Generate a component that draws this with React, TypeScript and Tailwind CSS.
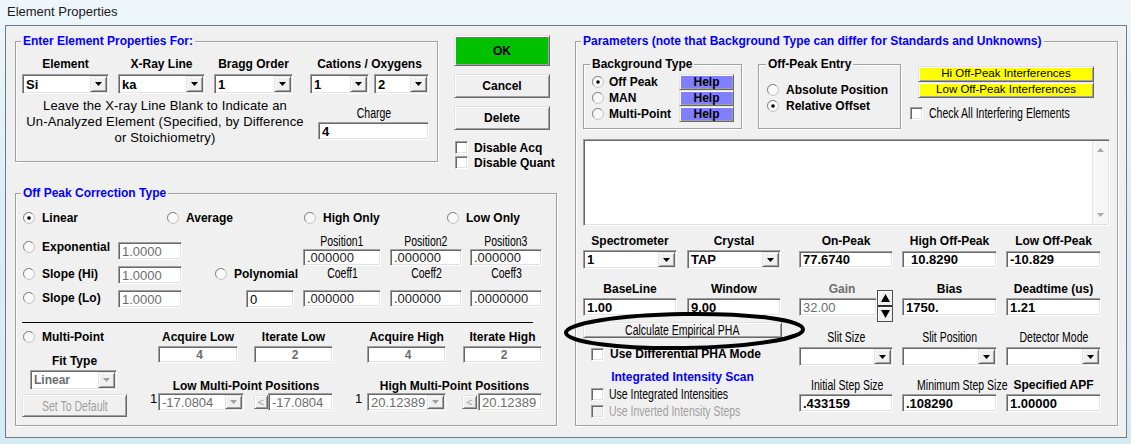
import React from 'react';

type P = { className?: string; children?: React.ReactNode };

// classic 3D borders
const SK = 'border border-t-[#a0a0a0] border-l-[#a0a0a0] border-b-white border-r-white shadow-[inset_1px_1px_0_#696969,inset_-1px_-1px_0_#e3e3e3]';
const RS = 'border border-t-[#e3e3e3] border-l-[#e3e3e3] border-b-[#696969] border-r-[#696969] shadow-[inset_1px_1px_0_#ffffff,inset_-1px_-1px_0_#a0a0a0]';
const BOLD = 'font-bold text-[12px] leading-[14px] whitespace-nowrap';
const GRAY = 'text-[#6d6d6d]';
const DIS = 'text-[#a0a0a0]';

function N({ children, className = '' }: P) {
    return <span className={`inline-block whitespace-nowrap text-[14px] leading-[14px] scale-x-[0.75] ${className}`}>{children}</span>;
}

function Group({ title, className = '', children, blue = true, tl = 'left-[5px]' }: P & { title: string; blue?: boolean; tl?: string }) {
    return (
        <div className={`relative shrink-0 border border-[#a0a0a0] shadow-[inset_1px_1px_0_#ffffff,1px_1px_0_#ffffff] ${className}`}>
            <span className={`absolute top-[-8px] px-[2px] bg-[#f0f0f0] ${tl} ${BOLD} ${blue ? 'text-[#0000ff]' : 'text-black'}`}>{title}</span>
            {children}
        </div>
    );
}

function Box({ className = '', children, t = 'font-bold text-[13px]' }: P & { t?: string }) {
    return <div className={`${SK} bg-white shrink-0 flex items-center pl-[3px] overflow-hidden whitespace-nowrap leading-none ${t} ${className}`}>{children}</div>;
}

function Combo({ className = '', value = '', disabled = false, t = 'font-bold text-[13px]' }: { className?: string; value?: string; disabled?: boolean; t?: string }) {
    return (
        <div className={`${SK} bg-white shrink-0 flex p-px ${className}`}>
            <div className={`flex-1 min-w-0 flex items-center pl-[2px] overflow-hidden whitespace-nowrap leading-none ${t} ${disabled ? GRAY : ''}`}>{value}</div>
            <div className={`${RS} bg-[#f0f0f0] w-[17px] shrink-0 flex items-center justify-center`}>
                <svg width="7" height="4" viewBox="0 0 7 4"><path d="M0 0H7L3.5 4Z" fill={disabled ? '#a0a0a0' : '#000'} /></svg>
            </div>
        </div>
    );
}

function Btn({ className = '', bg = 'bg-[#f0f0f0]', children }: P & { bg?: string }) {
    return <div className={`${RS} ${bg} shrink-0 flex items-center justify-center ${className}`}>{children}</div>;
}

function Radio({ checked = false }: { checked?: boolean }) {
    return (
        <svg width="12" height="12" viewBox="0 0 12 12" className="shrink-0">
            <circle cx="6" cy="6" r="5.5" fill="#f8f8f8" stroke="#c4c4c4" />
            <path d="M2 9.5A5 5 0 0 1 9.5 2" fill="none" stroke="#8a8a8a" />
            {checked && <circle cx="6" cy="6" r="1.8" fill="#000" />}
        </svg>
    );
}

function Check({ disabled = false }: { disabled?: boolean }) {
    return <div className={`${SK} ${disabled ? 'bg-[#f0f0f0]' : 'bg-white'} w-[13px] h-[13px] shrink-0`} />;
}

function RadioItem({ label, checked = false, className = '', gap = 'ml-[7px]' }: { label: string; checked?: boolean; className?: string; gap?: string }) {
    return (
        <div className={`flex items-center ${className}`}>
            <Radio checked={checked} />
            <span className={`${gap} ${BOLD}`}>{label}</span>
        </div>
    );
}

function Lbl({ children, className = '' }: P) {
    return <div className={`h-[14px] text-center ${BOLD} ${className}`}>{children}</div>;
}

function NLbl({ children, className = '' }: P) {
    return <div className={`h-[14px] leading-[14px] text-center ${className}`}><N>{children}</N></div>;
}

function Spin() {
    return (
        <div className="-mt-[6px] w-[16px] h-[32px] shrink-0 flex flex-col border border-[#505050] bg-[#f0f0f0]">
            <div className="flex-1 flex items-center justify-center border-b-2 border-[#303030] shadow-[inset_1px_1px_0_#ffffff]">
                <svg width="9" height="8" viewBox="0 0 9 8"><path d="M4.5 0L9 8H0Z" fill="#000" /></svg>
            </div>
            <div className="flex-1 flex items-center justify-center shadow-[inset_1px_1px_0_#ffffff]">
                <svg width="9" height="8" viewBox="0 0 9 8"><path d="M0 0H9L4.5 8Z" fill="#000" /></svg>
            </div>
        </div>
    );
}

export default function App() {
    return (
        <div className="relative w-[1131px] h-[444px] overflow-hidden bg-gradient-to-b from-[#eef6fb] via-[#dcedf6] to-[#d3ecf3] font-['Liberation_Sans',Arial,sans-serif] text-black">
            <div className="h-[25px] pt-[4px] pl-[7px] text-[13px] leading-[16px] text-[#1a1a1a]">Element Properties</div>
            <div className="ml-[5px] w-[1122px] h-[413px] border border-[#6f7a84] bg-[#f0f0f0] flex pl-[9px] pt-[9px]">
                {/* left column */}
                <div className="w-[542px] shrink-0 flex flex-col">
                    <div className="flex items-start">
                        <Group title="Enter Element Properties For:" className="mt-[6px] w-[423px] h-[121px]">
                            <div className="flex pl-[6px] pt-[15px]">
                                <div className="w-[87px] flex flex-col">
                                    <Lbl>Element</Lbl>
                                    <Combo className="mt-[3px] h-[20px] w-full" value="Si" />
                                </div>
                                <div className="ml-[9px] w-[87px] flex flex-col">
                                    <Lbl>X-Ray Line</Lbl>
                                    <Combo className="mt-[3px] h-[20px] w-full" value="ka" />
                                </div>
                                <div className="ml-[9px] w-[79px] flex flex-col">
                                    <Lbl>Bragg Order</Lbl>
                                    <Combo className="mt-[3px] h-[20px] w-full" value="1" />
                                </div>
                                <div className="ml-[17px] w-[119px] flex flex-col">
                                    <Lbl>Cations / Oxygens</Lbl>
                                    <div className="mt-[3px] flex">
                                        <Combo className="h-[20px] w-[59px]" value="1" />
                                        <Combo className="ml-[5px] h-[20px] w-[55px]" value="2" />
                                    </div>
                                </div>
                            </div>
                            <div className="flex">
                                <div className="w-[298px] mt-[4px] text-center text-[13px] leading-[16px] tracking-[0.15px]">
                                    Leave the X-ray Line Blank to Indicate an<br />
                                    Un-Analyzed Element (Specified, by Difference<br />
                                    or Stoichiometry)
                                </div>
                                <div className="ml-[4px] w-[111px] flex flex-col">
                                    <NLbl className="mt-[12px]">Charge</NLbl>
                                    <Box className="mt-[2px] h-[18px] w-full">4</Box>
                                </div>
                            </div>
                        </Group>
                        <div className="ml-[16px] w-[96px] flex flex-col">
                            <Btn className={`h-[31px] ${BOLD}`} bg="bg-[#00c000]">OK</Btn>
                            <Btn className={`mt-[8px] h-[24px] ${BOLD}`}>Cancel</Btn>
                            <Btn className={`mt-[8px] h-[24px] ${BOLD}`}>Delete</Btn>
                            <div className="mt-[10px] h-[15px] flex items-center pl-[1px]">
                                <Check />
                                <span className={`ml-[6px] ${BOLD}`}>Disable Acq</span>
                            </div>
                            <div className="h-[15px] flex items-center pl-[1px]">
                                <Check />
                                <span className={`ml-[6px] ${BOLD}`}>Disable Quant</span>
                            </div>
                        </div>
                    </div>

                    <Group title="Off Peak Correction Type" className="mt-[23px] w-[542px] h-[233px]">
                        <div className="mt-[17px] h-[14px] flex items-center pl-[7px]">
                            <RadioItem className="w-[144px]" label="Linear" checked />
                            <RadioItem className="w-[137px]" label="Average" />
                            <RadioItem className="w-[143px]" label="High Only" />
                            <RadioItem label="Low Only" />
                        </div>
                        <div className="flex items-start pl-[7px] h-[83px]">
                            <div className="w-[95px] shrink-0 flex flex-col">
                                <RadioItem className="mt-[15px] h-[14px]" label="Exponential" />
                                <RadioItem className="mt-[13px] h-[14px]" label="Slope (Hi)" />
                                <RadioItem className="mt-[10px] h-[14px]" label="Slope (Lo)" />
                            </div>
                            <div className="w-[64px] shrink-0 flex flex-col">
                                <Box className="mt-[17px] h-[18px] w-full" t={`text-[13px] ${GRAY}`}>1.0000</Box>
                                <Box className="mt-[6px] h-[18px] w-full" t={`text-[13px] ${GRAY}`}>1.0000</Box>
                                <Box className="mt-[6px] h-[18px] w-full" t={`text-[13px] ${GRAY}`}>1.0000</Box>
                            </div>
                            <div className="ml-[33px] w-[79px] shrink-0 flex flex-col">
                                <RadioItem className="mt-[42px] h-[14px]" label="Polynomial" />
                                <Box className="ml-[31px] mt-[9px] h-[18px] w-[48px]" t="text-[13px]">0</Box>
                            </div>
                            <div className="ml-[9px] flex">
                                {[
                                    ['Position1', 'Coeff1', '.000000', 'w-[78px]', ''],
                                    ['Position2', 'Coeff2', '.000000', 'w-[72px]', 'ml-[9px]'],
                                    ['Position3', 'Coeff3', '.0000000', 'w-[72px]', 'ml-[8px]'],
                                ].map(([p, c, v, w, m]) => (
                                    <div key={p} className={`${w} ${m} flex flex-col`}>
                                        <NLbl className="mt-[9px]">{p}</NLbl>
                                        <Box className="mt-[1px] h-[17px] w-full" t="text-[13px] text-[#222]">.000000</Box>
                                        <NLbl>{c}</NLbl>
                                        <Box className="mt-[10px] h-[17px] w-full" t="text-[13px] text-[#222]">{v}</Box>
                                    </div>
                                ))}
                            </div>
                        </div>
                        <div className="mt-[14px] ml-[6px] w-[511px] h-px bg-black" />
                        <div className="flex items-start pl-[6px]">
                            <div className="w-[105px] shrink-0 flex flex-col">
                                <RadioItem className="pl-[1px] mt-[7px] h-[14px]" label="Multi-Point" />
                                <Lbl className="mt-[10px]">Fit Type</Lbl>
                                <Combo className="ml-[8px] mt-[2px] h-[20px] w-[87px]" value="Linear" disabled t="font-bold text-[12px]" />
                                <Btn className="mt-[4px] h-[23px] w-full"><N className={DIS}>Set To Default</N></Btn>
                            </div>
                            <div className="ml-[23px] w-[184px] shrink-0 flex flex-col">
                                <div className="flex pl-[8px]">
                                    <div className="w-[80px] flex flex-col">
                                        <Lbl className="mt-[7px]">Acquire Low</Lbl>
                                        <Box className={`mt-[2px] h-[17px] w-full justify-center pl-0`} t={`font-bold text-[12px] ${GRAY}`}>4</Box>
                                    </div>
                                    <div className="ml-[16px] w-[79px] flex flex-col">
                                        <Lbl className="mt-[7px]">Iterate Low</Lbl>
                                        <Box className={`mt-[2px] h-[17px] w-full justify-center pl-0`} t={`font-bold text-[12px] ${GRAY}`}>2</Box>
                                    </div>
                                </div>
                                <Lbl className="mt-[16px] pl-[8px]">Low Multi-Point Positions</Lbl>
                                <div className="flex items-start">
                                    <span className="w-[8px] text-[13px] leading-[12px]">1</span>
                                    <Combo className="h-[18px] w-[86px]" value="-17.0804" disabled t="text-[13px]" />
                                    <Btn className={`ml-[10px] mt-[2px] h-[14px] w-[14px] text-[11px] leading-none ${DIS}`}>&lt;</Btn>
                                    <Box className="h-[18px] w-[65px]" t={`text-[13px] ${GRAY}`}>-17.0804</Box>
                                </div>
                            </div>
                            <div className="ml-[21px] w-[187px] shrink-0 flex flex-col">
                                <div className="flex pl-[12px]">
                                    <div className="w-[79px] flex flex-col">
                                        <Lbl className="mt-[7px]">Acquire High</Lbl>
                                        <Box className={`mt-[2px] h-[17px] w-full justify-center pl-0`} t={`font-bold text-[12px] ${GRAY}`}>4</Box>
                                    </div>
                                    <div className="ml-[17px] w-[79px] flex flex-col">
                                        <Lbl className="mt-[7px]">Iterate High</Lbl>
                                        <Box className={`mt-[2px] h-[17px] w-full justify-center pl-0`} t={`font-bold text-[12px] ${GRAY}`}>2</Box>
                                    </div>
                                </div>
                                <Lbl className="mt-[16px] pl-[12px]">High Multi-Point Positions</Lbl>
                                <div className="flex items-start">
                                    <span className="w-[12px] text-[13px] leading-[12px]">1</span>
                                    <Combo className="h-[18px] w-[79px]" value="20.12389" disabled t="text-[13px]" />
                                    <Btn className={`ml-[16px] mt-[2px] h-[14px] w-[15px] text-[11px] leading-none ${DIS}`}>&lt;</Btn>
                                    <Box className="ml-[1px] h-[18px] w-[64px]" t={`text-[13px] ${GRAY}`}>20.12389</Box>
                                </div>
                            </div>
                        </div>
                    </Group>
                </div>

                {/* right group */}
                <Group title="Parameters (note that Background Type can differ for Standards and Unknowns)" className="ml-[18px] mt-[6px] w-[543px] h-[385px]">
                    <div className="flex items-start">
                        <Group title="Background Type" blue={false} tl="left-[6px]" className="ml-[7px] mt-[22px] w-[159px] h-[65px]">
                            <div className="pt-[9px] pl-[8px] flex flex-col">
                                {[
                                    ['Off Peak', true],
                                    ['MAN', false],
                                    ['Multi-Point', false],
                                ].map(([l, c]) => (
                                    <div key={l as string} className="flex h-[16px]">
                                        <RadioItem className="w-[87px]" gap="ml-[5px]" label={l as string} checked={c as boolean} />
                                        <Btn className={`w-[55px] h-[16px] ${BOLD}`} bg="bg-[#8080ff]">Help</Btn>
                                    </div>
                                ))}
                            </div>
                        </Group>
                        <Group title="Off-Peak Entry" blue={false} tl="left-[7px]" className="ml-[16px] mt-[22px] w-[143px] h-[65px]">
                            <div className="pt-[17px] pl-[8px] flex flex-col">
                                <RadioItem className="h-[16px]" label="Absolute Position" />
                                <RadioItem className="h-[16px]" label="Relative Offset" checked />
                            </div>
                        </Group>
                        <div className="ml-[9px] flex flex-col">
                            <Btn className="ml-[8px] mt-[24px] w-[176px] h-[16px] text-[11.5px] leading-none" bg="bg-[#ffff00]">Hi Off-Peak Interferences</Btn>
                            <Btn className="ml-[8px] w-[176px] h-[16px] text-[11.5px] leading-none" bg="bg-[#ffff00]">Low Off-Peak Interferences</Btn>
                            <div className="mt-[8px] h-[14px] flex items-center">
                                <Check />
                                <span className="ml-[6px] w-[140px] flex"><N className="origin-left">Check All Interfering Elements</N></span>
                            </div>
                        </div>
                    </div>

                    <div className={`${SK} bg-white ml-[7px] mt-[10px] w-[527px] h-[87px] flex justify-end p-px`}>
                        <div className="w-[16px] bg-[#f6f6f6] border-l border-[#e6e6e6] flex flex-col items-center justify-between py-[7px]">
                            <svg width="7" height="4" viewBox="0 0 7 4"><path d="M3.5 0L7 4H0Z" fill="#a8a8a8" /></svg>
                            <svg width="7" height="4" viewBox="0 0 7 4"><path d="M0 0H7L3.5 4Z" fill="#a8a8a8" /></svg>
                        </div>
                    </div>

                    <div className="flex ml-[7px] mt-[8px]">
                        {/* left block */}
                        <div className="w-[199px] shrink-0 flex flex-col">
                            <div className="flex">
                                <div className="w-[94px] flex flex-col">
                                    <Lbl>Spectrometer</Lbl>
                                    <Combo className="mt-[2px] h-[19px] w-full" value="1" />
                                </div>
                                <div className="ml-[10px] w-[94px] flex flex-col">
                                    <Lbl>Crystal</Lbl>
                                    <Combo className="mt-[2px] h-[19px] w-full" value="TAP" />
                                </div>
                            </div>
                            <div className="flex mt-[13px]">
                                <div className="w-[94px] flex flex-col">
                                    <Lbl>BaseLine</Lbl>
                                    <Box className="mt-[2px] h-[18px] w-full">1.00</Box>
                                </div>
                                <div className="ml-[10px] w-[94px] flex flex-col">
                                    <Lbl>Window</Lbl>
                                    <Box className="mt-[2px] h-[18px] w-full">9.00</Box>
                                </div>
                            </div>
                            <Btn className="mt-[6px] h-[16px] w-[199px]"><N>Calculate Empirical PHA</N></Btn>
                            <div className="mt-[9px] h-[14px] pl-[8px] flex items-center">
                                <Check />
                                <span className={`ml-[6px] ${BOLD}`}>Use Differential PHA Mode</span>
                            </div>
                            <Lbl className="mt-[9px] text-[#0000ff]">Integrated Intensity Scan</Lbl>
                            <div className="mt-[3px] h-[14px] pl-[8px] flex items-center">
                                <Check />
                                <span className="ml-[5px] flex"><N className="origin-left">Use Integrated Intensities</N></span>
                            </div>
                            <div className="mt-[3px] h-[14px] pl-[8px] flex items-center">
                                <Check disabled />
                                <span className="ml-[5px] flex"><N className={`origin-left ${DIS}`}>Use Inverted Intensity Steps</N></span>
                            </div>
                        </div>

                        {/* right block */}
                        <div className="ml-[17px] flex flex-col">
                            <div className="flex">
                                <div className="w-[94px] flex flex-col">
                                    <Lbl>On-Peak</Lbl>
                                    <Box className="mt-[3px] h-[17px] w-full">77.6740</Box>
                                </div>
                                <div className="ml-[9px] w-[95px] flex flex-col">
                                    <Lbl>High Off-Peak</Lbl>
                                    <Box className="mt-[3px] h-[17px] w-full pl-[8px]">10.8290</Box>
                                </div>
                                <div className="ml-[9px] w-[95px] flex flex-col">
                                    <Lbl>Low Off-Peak</Lbl>
                                    <Box className="mt-[3px] h-[17px] w-full">-10.829</Box>
                                </div>
                            </div>
                            <div className="flex items-start mt-[14px]">
                                <div className="w-[94px] flex flex-col">
                                    <Lbl className={`pr-[8px] ${GRAY}`}>Gain</Lbl>
                                    <div className="flex items-start">
                                        <Box className="mt-[2px] h-[18px] w-[78px]" t={`text-[13px] ${GRAY}`}>32.00</Box>
                                        <Spin />
                                    </div>
                                </div>
                                <div className="ml-[9px] w-[95px] flex flex-col">
                                    <Lbl>Bias</Lbl>
                                    <Box className="mt-[2px] h-[18px] w-full">1750.</Box>
                                </div>
                                <div className="ml-[9px] w-[95px] flex flex-col">
                                    <Lbl>Deadtime (us)</Lbl>
                                    <Box className="mt-[2px] h-[18px] w-full">1.21</Box>
                                </div>
                            </div>
                            <div className="flex mt-[8px]">
                                <div className="w-[94px] flex flex-col">
                                    <NLbl>Slit Size</NLbl>
                                    <Combo className="mt-[3px] h-[19px] w-full" />
                                </div>
                                <div className="ml-[9px] w-[95px] flex flex-col">
                                    <NLbl>Slit Position</NLbl>
                                    <Combo className="mt-[3px] h-[19px] w-full" />
                                </div>
                                <div className="ml-[9px] w-[95px] flex flex-col">
                                    <NLbl>Detector Mode</NLbl>
                                    <Combo className="mt-[3px] h-[19px] w-full" />
                                </div>
                            </div>
                            <div className="flex mt-[12px]">
                                <div className="w-[94px] flex flex-col">
                                    <NLbl>Initial Step Size</NLbl>
                                    <Box className="mt-[2px] h-[18px] w-full">.433159</Box>
                                </div>
                                <div className="ml-[9px] w-[95px] flex flex-col">
                                    <NLbl>Minimum Step Size</NLbl>
                                    <Box className="mt-[2px] h-[18px] w-full">.108290</Box>
                                </div>
                                <div className="ml-[9px] w-[95px] flex flex-col">
                                    <Lbl>Specified APF</Lbl>
                                    <Box className="mt-[2px] h-[18px] w-full">1.00000</Box>
                                </div>
                            </div>
                        </div>
                    </div>
                </Group>
            </div>

            {/* hand-drawn annotation */}
            <svg className="absolute left-[562px] top-[309px] pointer-events-none" width="246" height="44" viewBox="0 0 246 44">
                <ellipse cx="122.5" cy="22" rx="118.5" ry="17" transform="rotate(-0.8 122.5 22)" fill="none" stroke="#000" strokeWidth="4" />
            </svg>
        </div>
    );
}
